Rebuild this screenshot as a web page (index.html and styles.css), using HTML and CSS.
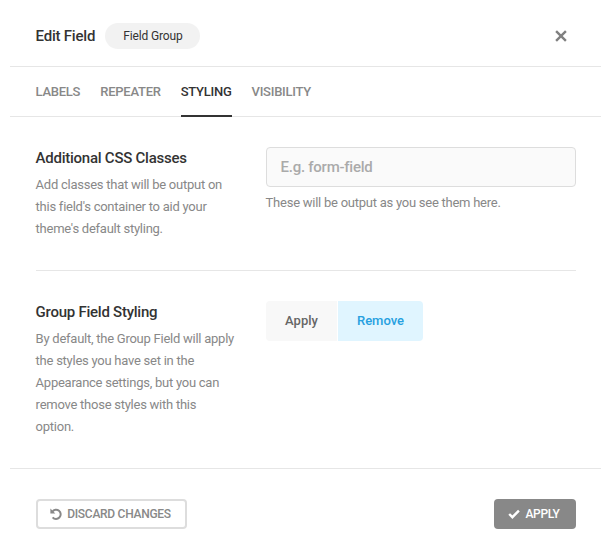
FILE: index.html
```html
<!DOCTYPE html>
<html lang="en">
<head>
<meta charset="utf-8">
<title>Edit Field</title>
<link rel="stylesheet" href="styles.css">
</head>
<body>
<div class="modal">
  <header class="head">
    <h1>Edit Field</h1>
    <span class="pill">Field Group</span>
    <button class="close" aria-label="Close"><svg width="12" height="12" viewBox="0 0 12 12"><path d="M1.1 1.1l9.8 9.8M10.9 1.1l-9.8 9.8" stroke="#808080" stroke-width="2.4"/></svg></button>
  </header>
  <nav class="tabs">
    <a>LABELS</a><a>REPEATER</a><a class="active">STYLING</a><a>VISIBILITY</a>
  </nav>
  <main>
    <section class="row first">
      <div class="info">
        <h2>Additional CSS Classes</h2>
        <p>Add classes that will be output on this field's container to aid your theme's default styling.</p>
      </div>
      <div class="control">
        <input type="text" placeholder="E.g. form-field">
        <p class="hint">These will be output as you see them here.</p>
      </div>
    </section>
    <section class="row second">
      <div class="info">
        <h2>Group Field Styling</h2>
        <p>By default, the Group Field will apply the styles you have set in the Appearance settings, but you can remove those styles with this option.</p>
      </div>
      <div class="control">
        <div class="toggle"><button>Apply</button><button class="on">Remove</button></div>
      </div>
    </section>
  </main>
  <footer class="foot">
    <button class="btn ghost"><svg width="12" height="12" viewBox="0 0 12 12"><path d="M2.3 3.7A4.6 4.6 0 1 1 2.6 9.3" fill="none" stroke="#888" stroke-width="2"/><path d="M.4.5v4.9h4.9z" fill="#888"/></svg>DISCARD CHANGES</button>
    <button class="btn solid"><svg width="12" height="10" viewBox="0 0 12 10"><path d="M1.2 5l3.2 3.2L10.9 1.6" fill="none" stroke="#fff" stroke-width="2.4"/></svg>APPLY</button>
  </footer>
</div>
</body>
</html>
```

FILE: styles.css
```css
* { box-sizing: border-box; }
body { margin: 0; background: #fff; font-family: Roboto, sans-serif; color: #888; }
h1, h2, p { margin: 0; }
button { font: inherit; border: 0; padding: 0; background: none; }
svg { display: block; }
.modal { width: 591px; margin-left: 10px; height: 553px; }
.head { display: flex; align-items: center; height: 67px; padding: 5px 34px 0 25.6px; border-bottom: 1px solid #e6e6e6; }
h1 { font-size: 15px; font-weight: 500; line-height: 30px; color: #333; letter-spacing: -.22px; width: 69.4px; white-space: nowrap; }
.pill { width: 95px; height: 26px; line-height: 26px; border-radius: 13px; background: #f2f2f2; color: #333; font-size: 12px; letter-spacing: -.15px; text-align: center; padding-left: 1px; }
.close { margin-left: auto; }
.tabs { display: flex; gap: 20px; height: 50px; padding-left: 25.5px; border-bottom: 1px solid #e6e6e6; font-size: 13px; font-weight: 500; line-height: 50px; letter-spacing: -.25px; }
.tabs a { height: 50px; }
.tabs .active { color: #333; border-bottom: 2px solid #333; }
main { padding: 0 25px 0 26px; }
.row { display: flex; }
.first { height: 154px; padding-top: 30px; border-bottom: 1px solid #e6e6e6; }
.second { height: 197px; padding-top: 30px; }
.info { width: 230px; padding-right: 30px; }
.info h2, .info p, .hint { margin-left: -.4px; }
h2 { font-size: 15px; font-weight: 500; line-height: 22px; color: #333; margin-bottom: 5px; letter-spacing: -.25px; }
.info p, .hint { font-size: 13px; line-height: 22px; letter-spacing: -.25px; }
.control { width: 310px; }
input { display: block; width: 310px; height: 40px; padding: 0 13.5px; border: 1px solid #ddd; border-radius: 4px; background: #fafafa; font: 500 15px Roboto, sans-serif; letter-spacing: -.25px; }
input::placeholder { color: #aaa; }
.hint { margin-top: 5px; }
.toggle { display: flex; gap: 1px; width: 157px; height: 40px; border-radius: 4px; overflow: hidden; font-size: 13px; font-weight: 500; letter-spacing: -.25px; }
.toggle button { width: 71px; background: #f8f8f8; color: #666; padding-bottom: 2px; }
.toggle .on { width: 85px; background: #e0f5ff; color: #26a0e0; }
.foot { display: flex; justify-content: space-between; height: 85px; padding: 30px 25px 0 26px; border-top: 1px solid #e6e6e6; }
.btn { display: flex; align-items: center; justify-content: center; gap: 5px; height: 30px; border-radius: 4px; font-size: 12px; font-weight: 500; letter-spacing: -.28px; padding-right: 2px; }
.ghost { width: 151px; border: 2px solid #ddd; color: #888; }
.solid { width: 82px; background: #888; color: #fff; }
```
